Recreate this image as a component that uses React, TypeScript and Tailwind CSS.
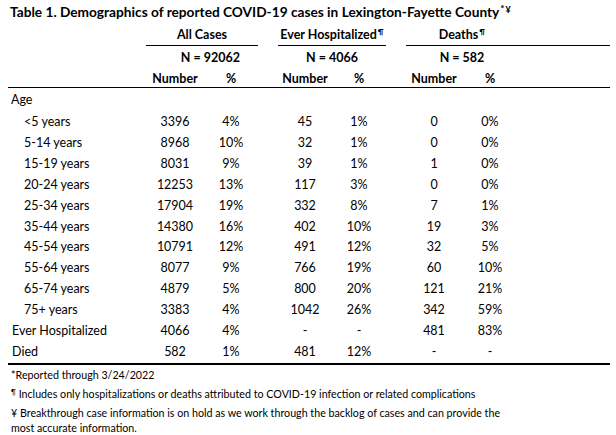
const rows = [
  { label: "<5 years", n: "3396", p: "4%", hn: "45", hp: "1%", dn: "0", dp: "0%", indent: true },
  { label: "5-14 years", n: "8968", p: "10%", hn: "32", hp: "1%", dn: "0", dp: "0%", indent: true },
  { label: "15-19 years", n: "8031", p: "9%", hn: "39", hp: "1%", dn: "1", dp: "0%", indent: true },
  { label: "20-24 years", n: "12253", p: "13%", hn: "117", hp: "3%", dn: "0", dp: "0%", indent: true },
  { label: "25-34 years", n: "17904", p: "19%", hn: "332", hp: "8%", dn: "7", dp: "1%", indent: true },
  { label: "35-44 years", n: "14380", p: "16%", hn: "402", hp: "10%", dn: "19", dp: "3%", indent: true },
  { label: "45-54 years", n: "10791", p: "12%", hn: "491", hp: "12%", dn: "32", dp: "5%", indent: true },
  { label: "55-64 years", n: "8077", p: "9%", hn: "766", hp: "19%", dn: "60", dp: "10%", indent: true },
  { label: "65-74 years", n: "4879", p: "5%", hn: "800", hp: "20%", dn: "121", dp: "21%", indent: true },
  { label: "75+ years", n: "3383", p: "4%", hn: "1042", hp: "26%", dn: "342", dp: "59%", indent: true },
  { label: "Ever Hospitalized", n: "4066", p: "4%", hn: "-", hp: "-", dn: "481", dp: "83%", indent: false },
  { label: "Died", n: "582", p: "1%", hn: "481", hp: "12%", dn: "-", dp: "-", indent: false },
];

const cols = "grid grid-cols-[146px_58px_54px_20px_54px_54px_20px_56px_56px_1fr]";

export default function App() {
  return (
    <div className="w-[616px] h-[435px] bg-white text-black overflow-hidden font-['Lato',sans-serif]">
      <div className="pl-[10px] pt-[3px] h-[22px] text-[13.7px] font-bold leading-[18px] whitespace-nowrap">
        Table 1. Demographics of reported COVID-19 cases in Lexington-Fayette County
        <sup className="text-[10px] ml-[1px]">*</sup>
        <sup className="text-[9px] ml-[1px]">¥</sup>
      </div>

      <div className="pr-[6px] text-[12.5px] font-bold">
        <div className={`${cols} h-[24px] items-end`}>
          <div />
          <div className="col-span-2 border-b border-black text-center leading-[18px] h-[20px]">All Cases</div>
          <div />
          <div className="col-span-2 border-b border-black text-center leading-[18px] h-[20px]">
            Ever Hospitalized<sup className="text-[8px] ml-[1px]">¶</sup>
          </div>
          <div />
          <div className="col-span-3 border-b border-black h-[20px]">
            <div className="w-[112px] text-center leading-[18px]">
              Deaths<sup className="text-[8px] ml-[1px]">¶</sup>
            </div>
          </div>
        </div>
        <div className={`${cols} h-[24px] items-center`}>
          <div />
          <div className="col-span-2 text-right pr-[18px]">N = 92062</div>
          <div />
          <div className="col-span-2 text-center">N = 4066</div>
          <div />
          <div className="col-span-2 text-center">N = 582</div>
        </div>
        <div className="ml-[8px] border-b border-black">
          <div className={`${cols} -ml-[8px] h-[17px] items-center text-center`}>
            <div />
            <div>Number</div>
            <div>%</div>
            <div />
            <div>Number</div>
            <div>%</div>
            <div />
            <div>Number</div>
            <div>%</div>
          </div>
        </div>
      </div>

      <div className="pr-[6px] text-[12.5px]">
        <div className="h-[24px] pl-[11px] flex items-center">Age</div>
        <div className="border-b-2 border-black ml-[8px]">
          <div className="-ml-[8px]">
            {rows.map((r) => (
              <div key={r.label} className={`${cols} h-[20.9px] items-center text-center whitespace-nowrap`}>
                <div className={`text-left ${r.indent ? "pl-[24px]" : "pl-[12px]"}`}>{r.label}</div>
                <div>{r.n}</div>
                <div>{r.p}</div>
                <div />
                <div>{r.hn}</div>
                <div>{r.hp}</div>
                <div />
                <div>{r.dn}</div>
                <div>{r.dp}</div>
              </div>
            ))}
          </div>
        </div>
      </div>

      <div className="pl-[11px] text-[10.7px] leading-[19.5px]">
        <div>*Reported through 3/24/2022</div>
        <div>
          <sup className="text-[7px]">¶</sup> Includes only hospitalizations or deaths attributed to COVID-19 infection or related complications
        </div>
        <div className="leading-[15px] pt-[1px]">
          ¥ Breakthrough case information is on hold as we work through the backlog of cases and can provide the
          <br />
          most accurate information.
        </div>
      </div>
    </div>
  );
}
